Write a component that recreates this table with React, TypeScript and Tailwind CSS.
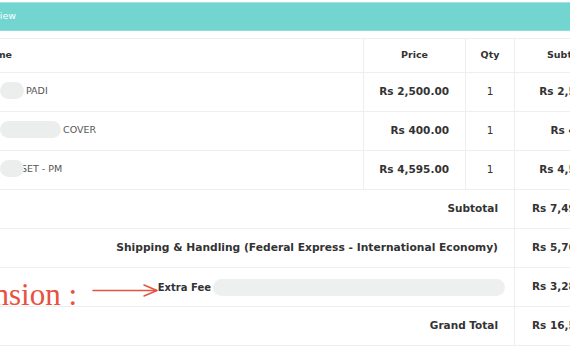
import React from "react";

const blob = "bg-[#eceeee] rounded-full h-[17px] shrink-0";

function ItemRow({ blobW, name, price, sub, overlap }: { blobW: number; name: string; price: string; sub: string; overlap?: boolean }) {
  return (
    <div className="flex h-[39px] border-b border-[#eeeeee]">
      <div className="w-[363px] flex items-center">
        <span className={`${blob} relative z-10 -mt-[3px]`} style={{ width: blobW }} />
        <span className={`text-[9.5px] text-[#555] whitespace-nowrap -mt-[2px] ${overlap ? "-ml-[3px]" : "ml-[2px]"}`}>{name}</span>
      </div>
      <div className="w-[102px] border-l border-[#eeeeee] flex items-center justify-end pr-[16px] font-bold text-[10.5px] text-[#333]">{price}</div>
      <div className="w-[49px] border-l border-[#eeeeee] flex items-center justify-center text-[10.5px] text-[#333]">1</div>
      <div className="w-[111px] border-l border-[#eeeeee] flex items-center justify-end pr-[16px] font-bold text-[10.5px] text-[#333] whitespace-nowrap">{sub}</div>
    </div>
  );
}

function TotalRow({ label, value, children, size }: { label?: string; value: string; children?: React.ReactNode; size?: string }) {
  return (
    <div className="flex h-[39px] border-b border-[#eeeeee]">
      <div className={`w-[514px] flex items-center justify-end pr-[16px] font-bold ${size ?? "text-[10.5px]"} text-[#333] whitespace-nowrap`}>
        {children ?? label}
      </div>
      <div className="w-[111px] border-l border-[#eeeeee] flex items-center pl-[17px] font-bold text-[10.5px] text-[#333] whitespace-nowrap">{value}</div>
    </div>
  );
}

export default function App() {
  return (
    <div className="w-[570px] h-[350px] overflow-hidden bg-white relative font-['DejaVu_Sans',sans-serif]">
      <div className="pt-[2px]">
        <div className="h-[29px] bg-[#72d5cf] border-t border-[#a4e4df] border-b border-b-[#8fdcd7] flex items-center">
          <div className="w-[16px] flex justify-end whitespace-nowrap text-white text-[9.5px]">Order Review</div>
        </div>
      </div>
      <div className="mt-[7px] border-t border-[#eeeeee] w-[625px]">
        <div className="flex h-[34px] border-b border-[#eeeeee] font-bold text-[9.5px] text-[#333]">
          <div className="w-[363px] flex items-center">
            <div className="w-[12px] flex justify-end whitespace-nowrap">Name</div>
          </div>
          <div className="w-[102px] border-l border-[#eeeeee] flex items-center justify-center">Price</div>
          <div className="w-[49px] border-l border-[#eeeeee] flex items-center justify-center">Qty</div>
          <div className="w-[111px] border-l border-[#eeeeee] flex items-center pl-[32px]">Subtotal</div>
        </div>
        <ItemRow blobW={24} name="PADI" price="Rs 2,500.00" sub="Rs 2,500.00" />
        <ItemRow blobW={61} name="COVER" price="Rs 400.00" sub="Rs 400.00" />
        <ItemRow blobW={24} name="SET - PM" price="Rs 4,595.00" sub="Rs 4,595.00" overlap />
        <TotalRow label="Subtotal" value="Rs 7,495.00" />
        <TotalRow label="Shipping & Handling (Federal Express - International Economy)" value="Rs 5,760.00" size="text-[10.7px]" />
        <TotalRow value="Rs 3,280.00">
          <div className="flex items-center -mr-[7px]">
            <span className="text-[10px]">Extra Fee</span>
            <span className={`${blob} ml-[2px] w-[292px] bg-[#eef0f0]`} />
          </div>
        </TotalRow>
        <TotalRow label="Grand Total" value="Rs 16,535.00" />
      </div>
      <div className="absolute right-[493px] top-[279px] text-[31px] leading-none text-[#e8503f] whitespace-nowrap font-['Liberation_Serif',serif]">
        Dimension :
      </div>
      <svg className="absolute left-[90px] top-[282px]" width="70" height="18" viewBox="0 0 70 18" fill="none">
        <path d="M3 8.5 H66.5" stroke="#e5533f" strokeWidth="1.5" strokeLinecap="round" />
        <path d="M54 3 L67 8.5 L54 14" stroke="#e5533f" strokeWidth="1.5" strokeLinecap="round" strokeLinejoin="round" />
      </svg>
    </div>
  );
}
